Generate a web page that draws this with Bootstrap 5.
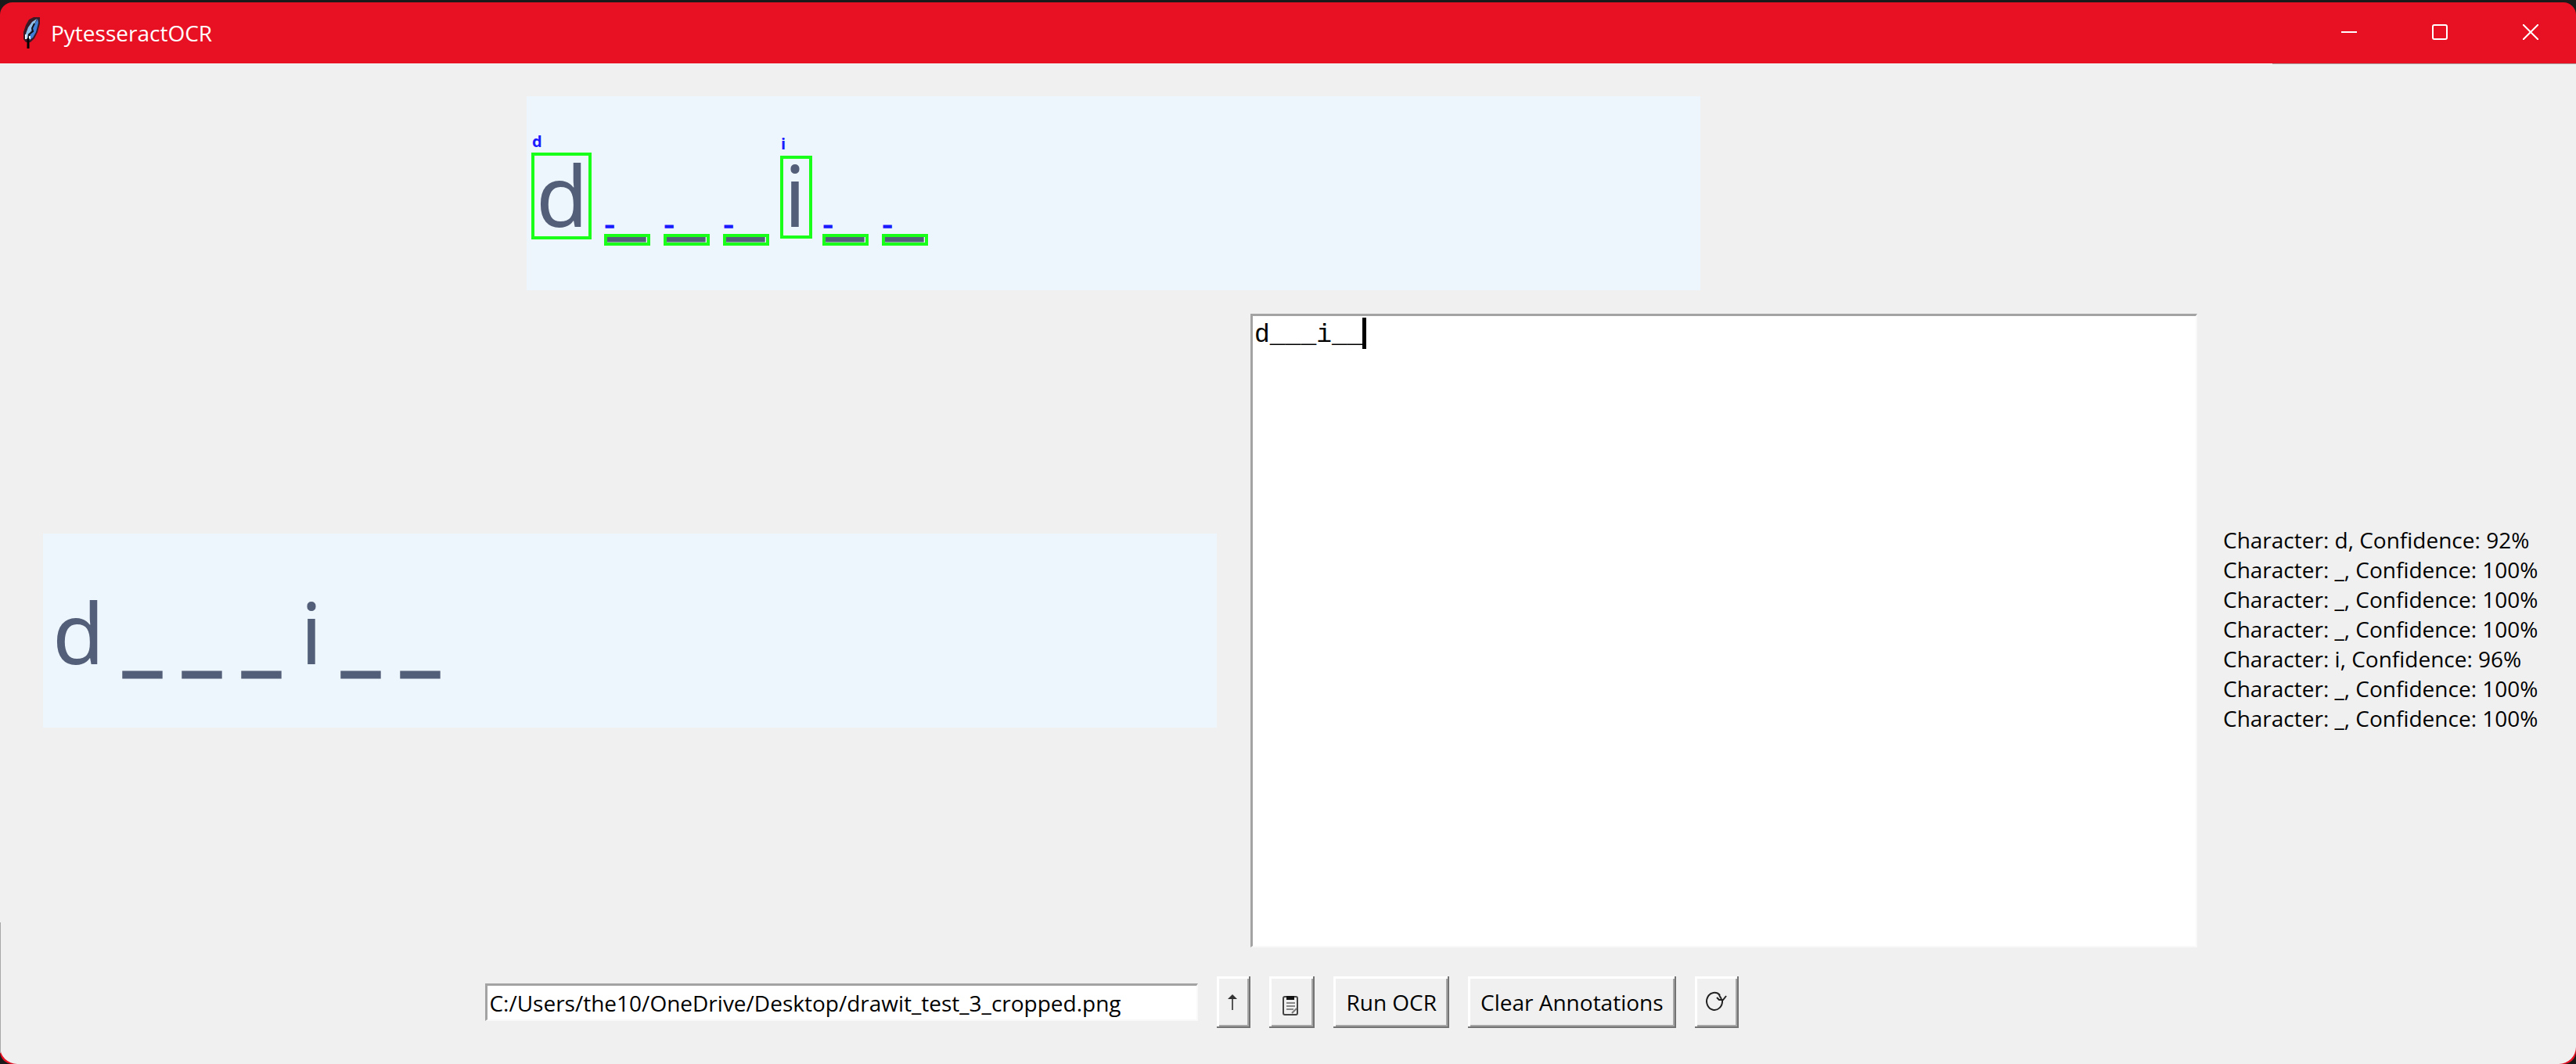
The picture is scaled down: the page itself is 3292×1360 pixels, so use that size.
<!DOCTYPE html>
<html lang="en">
<head>
<meta charset="utf-8">
<meta name="viewport" content="width=device-width, initial-scale=1">
<title>PytesseractOCR</title>
<link href="https://cdn.jsdelivr.net/npm/bootstrap@5.3.0/dist/css/bootstrap.min.css" rel="stylesheet">
<style>
  body { background: #1a1a1a; color: #000; font: 28px/38px "Open Sans", "Noto Sans", sans-serif; }
  .app-window { min-height: calc(100vh - 3px); margin-top: 3px; background: #e81123; border-radius: 16px; }
  .title-bar { height: 78px; color: #fff; padding-left: 30px; }
  .title-bar h1 { font-size: 28px; line-height: 38px; font-weight: 400; }
  .title-bar::after { content: ""; position: absolute; right: 0; bottom: -1px; width: 388px; height: 1px; background: #a8a0a0; z-index: 1; }
  .feather { width: 21px; height: 40px; margin-right: 14px; }
  .caption-btn { width: 116px; height: 78px; background: none; border: 0; color: #fff; padding: 0 0 2px; }
  .client { background: #f0f0f0; border-radius: 0 0 22px 22px; padding: 42px 43px 46px 38px;
    display: grid; grid-template-columns: minmax(0, 1fr) 408px; grid-template-rows: auto 1fr auto; column-gap: 33px; }
  .client::before { content: ""; position: absolute; left: 0; bottom: 14px; width: 1px; height: 167px; background: #a8a8a8; }
  .shot { background: #edf5fd; max-width: 100%; }
  .shot .glyph { font: 108px "Noto Sans", sans-serif; fill: #535f78; }
  .shot .blank { stroke: #535f78; stroke-width: 3px; }
  .shot .found { fill: none; stroke: #1aff1a; stroke-width: 4px; }
  .shot .tag { font: bold 20px "Open Sans", sans-serif; fill: #1a1aff; }
  .shot .dash { stroke: #1a1aff; stroke-width: 3px; }
  .work-row, .results { margin: 30px 0 37px; }
  .work-row { gap: 43px; padding-left: 17px; }
  .results { padding-bottom: 4px; }
  .sunken { background: #fff; border: solid; border-width: 3px 2px 2px 3px; border-color: #a3a3a3 #f9f9f9 #f9f9f9 #a3a3a3; border-radius: 0; color: #000; }
  .output { font: 33px/40px "Liberation Mono", monospace; min-height: 400px; }
  .output textarea { font: inherit; color: inherit; background: none; border: 0; outline: 0; resize: none; padding: 5px 2px; }
  .caret { position: absolute; top: 2px; left: calc(7ch + 1px); width: 5px; height: 40px; background: #000; }
  .controls { gap: 24px; padding-right: 4px; }
  .path-box { width: 911px; height: 48px; padding: 0 2px; }
  .tk-btn { height: 66px; padding: 0 11px; color: #000; background: #f0f0f0; border: 0; white-space: nowrap;
    box-shadow: inset -2px -2px #737373, inset 3px 3px #fff, inset -4px -4px #a6a6a6; }
</style>
<script src="https://cdn.jsdelivr.net/npm/bootstrap@5.3.0/dist/js/bootstrap.bundle.min.js" defer></script>
</head>
<body>
<div class="app-window d-flex flex-column overflow-hidden">
  <header class="title-bar d-flex align-items-center position-relative">
    <svg class="feather" viewBox="0 0 21 40" aria-hidden="true">
      <path d="M13 0h8v8l-3 11-4 8-5 5H3l-3-4 0-9 3-9 4-7z" fill="#3a1a26"/>
      <path d="M18 2l1 5-3 12-4 7-5 4 2-10 4-9z" fill="#3f7fd6"/>
      <path d="M17 2l-6 4-5 7-3 8-1 7 3 0 4-9 4-8z" fill="#8fc0ec"/>
      <path d="M14 8l-3 6 1 4-5 4-1 8" fill="none" stroke="#101018" stroke-width="2"/>
      <path d="M3 22v6M8 24v4" stroke="#f0f4f8" stroke-width="2"/>
      <path d="M6 27v13" stroke="#000" stroke-width="3"/>
    </svg>
    <h1 class="m-0 flex-grow-1">PytesseractOCR</h1>
    <div class="d-flex">
      <button class="caption-btn" type="button" aria-label="Minimize"><svg class="d-block mx-auto" width="20" height="20" fill="none" stroke="currentColor" stroke-width="2"><path d="M0 10h20"/></svg></button>
      <button class="caption-btn" type="button" aria-label="Maximize"><svg class="d-block mx-auto" width="20" height="20" fill="none" stroke="currentColor" stroke-width="2"><rect x="1" y="1" width="18" height="18" rx="2"/></svg></button>
      <button class="caption-btn" type="button" aria-label="Close"><svg class="d-block mx-auto" width="20" height="20" fill="none" stroke="currentColor" stroke-width="2"><path d="M0 0l20 20M20 0L0 20"/></svg></button>
    </div>
  </header>

  <main class="client flex-grow-1 position-relative">
    <div class="d-flex justify-content-center">
      <svg class="shot" width="1500" height="248" viewBox="0 0 1500 248" role="img" aria-label="Annotated image">
        <g class="glyph">
          <text x="12" y="167">d</text>
          <text x="329" y="167">i</text>
          <g class="blank">
            <text x="103" y="168">_</text><text x="179" y="168">_</text><text x="255" y="168">_</text>
            <text x="382" y="168">_</text><text x="458" y="168">_</text>
          </g>
        </g>
        <g class="found">
          <rect x="8" y="74" width="73" height="107"/>
          <rect x="326" y="78" width="37" height="102"/>
          <rect x="101" y="178" width="55" height="11"/><rect x="177" y="178" width="55" height="11"/><rect x="253" y="178" width="55" height="11"/>
          <rect x="380" y="178" width="55" height="11"/><rect x="456" y="178" width="55" height="11"/>
        </g>
        <g class="tag">
          <text x="7" y="65">d</text><text x="325" y="68">i</text>
          <g class="dash">
            <text x="102" y="164">_</text><text x="178" y="164">_</text><text x="254" y="164">_</text>
            <text x="381" y="164">_</text><text x="457" y="164">_</text>
          </g>
        </g>
      </svg>
    </div>
    <div></div>

    <div class="work-row d-flex align-items-stretch">
      <svg class="shot flex-shrink-0 align-self-center" width="1500" height="248" viewBox="0 0 1500 248" role="img" aria-label="Source image">
        <g class="glyph">
          <text x="12" y="167">d</text>
          <text x="329" y="167">i</text>
          <g class="blank">
            <text x="103" y="167">_</text><text x="179" y="167">_</text><text x="255" y="167">_</text>
            <text x="382" y="167">_</text><text x="458" y="167">_</text>
          </g>
        </g>
      </svg>
      <div class="output sunken position-relative flex-grow-1 d-flex">
        <textarea class="flex-grow-1" aria-label="Recognized text" spellcheck="false">d___i__</textarea>
        <span class="caret"></span>
      </div>
    </div>
    <ul class="results list-unstyled align-self-center text-nowrap">
      <li>Character: d, Confidence: 92%</li>
      <li>Character: _, Confidence: 100%</li>
      <li>Character: _, Confidence: 100%</li>
      <li>Character: _, Confidence: 100%</li>
      <li>Character: i, Confidence: 96%</li>
      <li>Character: _, Confidence: 100%</li>
      <li>Character: _, Confidence: 100%</li>
    </ul>

    <form class="controls d-flex justify-content-center align-items-center">
      <input class="path-box sunken" type="text" aria-label="Image path" spellcheck="false" value="C:/Users/the10/OneDrive/Desktop/drawit_test_3_cropped.png">
      <button class="tk-btn" type="button" aria-label="Upload"><svg class="d-block" width="21" height="24" viewBox="0 0 21 24" fill="none" stroke="#555" stroke-width="2"><path d="M9 22V5"/><path d="M9 2l6 6H3z" fill="#333" stroke="none"/></svg></button>
      <button class="tk-btn" type="button" aria-label="Paste from clipboard"><svg class="d-block" width="36" height="36" viewBox="0 0 36 36" fill="none" stroke="#444" stroke-width="2"><rect x="7" y="11" width="18" height="23" rx="2"/><path d="M12 11h8v3h-8z" fill="#111" stroke="#111"/><path d="M11 19h11M11 23h11M11 27h9" stroke="#888"/><path d="M18 32l6-6" stroke="#777"/></svg></button>
      <button class="tk-btn px-3" type="button">Run OCR</button>
      <button class="tk-btn px-3" type="button">Clear Annotations</button>
      <button class="tk-btn" type="button" aria-label="Refresh"><svg class="d-block" width="34" height="30" viewBox="0 0 34 30" fill="none" stroke="#222" stroke-width="2"><path d="M21 6a10 11 0 1 0 3 7"/><path d="M17 9l3 3h5l4-5"/><path d="M20 6l3 5"/></svg></button>
    </form>
  </main>
</div>
</body>
</html>
